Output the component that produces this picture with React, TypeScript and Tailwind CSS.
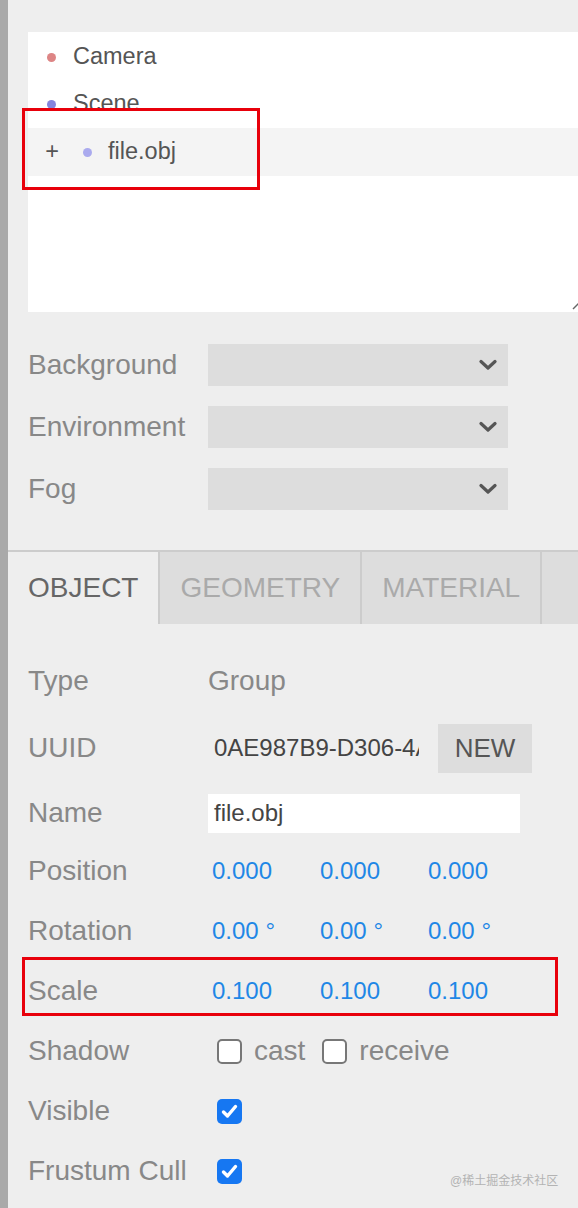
import React from 'react';

const Chevron = () => (
  <svg width="18" height="12" viewBox="0 0 18 12" className="shrink-0">
    <path d="M2 2.5 L9 9 L16 2.5" fill="none" stroke="#555" strokeWidth="3.2" strokeLinecap="round" strokeLinejoin="round" />
  </svg>
);

const Select = ({ label }: { label: string }) => (
  <div className="flex items-center h-[42px]">
    <div className="w-[180px] text-[28px] text-[#888]">{label}</div>
    <div className="w-[300px] h-[42px] bg-[#dddddd] flex items-center justify-end pr-[11px]">
      <Chevron />
    </div>
  </div>
);

const CheckBox = ({ checked }: { checked?: boolean }) =>
  checked ? (
    <div className="w-[25px] h-[25px] rounded-[5px] bg-[#1677f2] flex items-center justify-center">
      <svg width="17" height="15" viewBox="0 0 17 15">
        <path d="M2.5 8 L6.5 12 L14.5 2.5" fill="none" stroke="white" strokeWidth="3.4" strokeLinecap="round" strokeLinejoin="round" />
      </svg>
    </div>
  ) : (
    <div className="w-[25px] h-[25px] rounded-[5px] border-2 border-[#777] bg-white" />
  );

const Row = ({ label, h = 'h-[60px]', children }: { label: string; h?: string; children?: React.ReactNode }) => (
  <div className={`flex items-center ${h}`}>
    <div className="w-[180px] shrink-0 text-[28px] text-[#888]">{label}</div>
    {children}
  </div>
);

const Vec = ({ values }: { values: string[] }) => (
  <div className="flex pl-1">
    {values.map((v, i) => (
      <div key={i} className="w-[108px] text-[24px] text-[#1f87e6]">{v}</div>
    ))}
  </div>
);

export default function App() {
  return (
    <div className="flex w-[578px] h-[1208px] overflow-hidden bg-[#eeeeee] font-['Liberation_Sans',Arial,sans-serif] leading-none">
      <div className="w-2 shrink-0 bg-[#a9a9a9]" />

      <div className="relative flex-1 flex flex-col">
        {/* outliner */}
        <div className="pt-8 pl-5">
          <div className="relative w-[560px] h-[280px] bg-white text-[23.5px] text-[#555]">
            <div className="flex items-center h-12 pl-[19px] pt-[2px]">
              <span className="w-[9px] h-[9px] rounded-full bg-[#dd8585]" />
              <span className="ml-[17px]">Camera</span>
            </div>
            <div className="flex items-center h-12 pl-[19px]">
              <span className="w-[9px] h-[9px] rounded-full bg-[#8585dd]" />
              <span className="ml-[17px]">Scene</span>
            </div>
            <div className="relative -mt-4">
              <div className="h-4 bg-white/90" />
              <div className="flex items-center h-12 pl-[17px] bg-[#f4f4f4]">
                <span className="w-[14px] text-center">+</span>
                <span className="ml-[24px] w-[9px] h-[9px] rounded-full bg-[#aaaaee]" />
                <span className="ml-[16px]">file.obj</span>
              </div>
            </div>
            <svg width="10" height="10" viewBox="0 0 10 10" className="absolute right-[6px] bottom-[2px]">
              <path d="M1 9 L9 1" stroke="#666" strokeWidth="1.4" />
            </svg>
          </div>
        </div>

        {/* scene options */}
        <div className="pl-5 pt-8 flex flex-col gap-5">
          <Select label="Background" />
          <Select label="Environment" />
          <Select label="Fog" />
        </div>

        {/* tabs */}
        <div className="mt-10 border-t-2 border-[#cccccc] flex h-[74px] text-[28px]">
          <div className="flex items-center px-5 text-[#666] bg-[#eeeeee]">OBJECT</div>
          <div className="flex items-center px-5 text-[#aaa] bg-[#dddddd] border-l-2 border-[#cccccc]">GEOMETRY</div>
          <div className="flex items-center px-5 text-[#aaa] bg-[#dddddd] border-l-2 border-[#cccccc]">MATERIAL</div>
          <div className="flex-1 bg-[#dddddd] border-l-2 border-[#cccccc]" />
        </div>

        {/* object properties */}
        <div className="pl-5 pt-[27px] flex flex-col">
          <Row label="Type">
            <span className="text-[28px] text-[#888]">Group</span>
          </Row>
          <Row label="UUID" h="h-[74px]">
            <div className="w-[230px] pl-[6px]">
              <div className="w-[205px] overflow-hidden whitespace-nowrap text-[24px] text-[#444]">
                0AE987B9-D306-4A2F
              </div>
            </div>
            <div className="w-[94px] h-[49px] bg-[#dddddd] flex items-center justify-center text-[26px] text-[#555]">NEW</div>
          </Row>
          <Row label="Name" h="h-[56px]">
            <div className="w-[312px] h-[39px] bg-white flex items-center pl-[6px] text-[24px] text-[#444]">file.obj</div>
          </Row>
          <Row label="Position">
            <Vec values={['0.000', '0.000', '0.000']} />
          </Row>
          <Row label="Rotation">
            <Vec values={['0.00 °', '0.00 °', '0.00 °']} />
          </Row>
          <Row label="Scale">
            <Vec values={['0.100', '0.100', '0.100']} />
          </Row>
          <Row label="Shadow">
            <div className="flex items-center pl-[9px] text-[28px] text-[#888]">
              <CheckBox />
              <span className="ml-3">cast</span>
              <span className="ml-[17px]"><CheckBox /></span>
              <span className="ml-3">receive</span>
            </div>
          </Row>
          <Row label="Visible">
            <div className="pl-[9px]"><CheckBox checked /></div>
          </Row>
          <Row label="Frustum Cull">
            <div className="pl-[9px]"><CheckBox checked /></div>
          </Row>
        </div>

        {/* annotations */}
        <div className="absolute left-[14px] top-[108px] w-[238px] h-[82px] border-[3px] border-[#e8000b]" />
        <div className="absolute left-[14px] top-[957px] w-[536px] h-[59px] border-[3px] border-[#e8000b]" />
        <div className="absolute left-[442px] top-[1175px] text-[12px] text-[#b3b3b3] font-['Liberation_Sans','Noto_Sans_CJK_SC',sans-serif]">
          @稀土掘金技术社区
        </div>
      </div>
    </div>
  );
}
